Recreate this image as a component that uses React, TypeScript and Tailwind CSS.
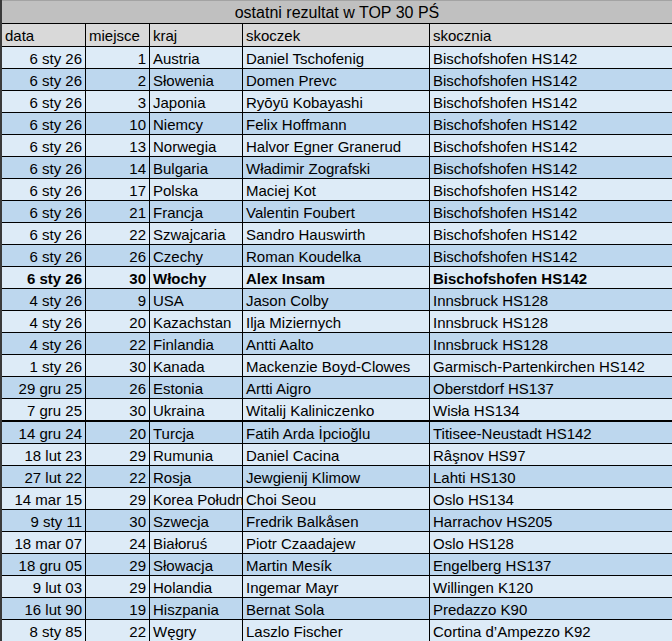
import React from 'react';

type Row = [string, number, string, string, string];

const rows: Row[] = [
  ['6 sty 26', 1, 'Austria', 'Daniel Tschofenig', 'Bischofshofen HS142'],
  ['6 sty 26', 2, 'Słowenia', 'Domen Prevc', 'Bischofshofen HS142'],
  ['6 sty 26', 3, 'Japonia', 'Ryōyū Kobayashi', 'Bischofshofen HS142'],
  ['6 sty 26', 10, 'Niemcy', 'Felix Hoffmann', 'Bischofshofen HS142'],
  ['6 sty 26', 13, 'Norwegia', 'Halvor Egner Granerud', 'Bischofshofen HS142'],
  ['6 sty 26', 14, 'Bulgaria', 'Władimir Zografski', 'Bischofshofen HS142'],
  ['6 sty 26', 17, 'Polska', 'Maciej Kot', 'Bischofshofen HS142'],
  ['6 sty 26', 21, 'Francja', 'Valentin Foubert', 'Bischofshofen HS142'],
  ['6 sty 26', 22, 'Szwajcaria', 'Sandro Hauswirth', 'Bischofshofen HS142'],
  ['6 sty 26', 26, 'Czechy', 'Roman Koudelka', 'Bischofshofen HS142'],
  ['6 sty 26', 30, 'Włochy', 'Alex Insam', 'Bischofshofen HS142'],
  ['4 sty 26', 9, 'USA', 'Jason Colby', 'Innsbruck HS128'],
  ['4 sty 26', 20, 'Kazachstan', 'Ilja Miziernych', 'Innsbruck HS128'],
  ['4 sty 26', 22, 'Finlandia', 'Antti Aalto', 'Innsbruck HS128'],
  ['1 sty 26', 30, 'Kanada', 'Mackenzie Boyd-Clowes', 'Garmisch-Partenkirchen HS142'],
  ['29 gru 25', 26, 'Estonia', 'Artti Aigro', 'Oberstdorf HS137'],
  ['7 gru 25', 30, 'Ukraina', 'Witalij Kaliniczenko', 'Wisła HS134'],
  ['14 gru 24', 20, 'Turcja', 'Fatih Arda İpcioğlu', 'Titisee-Neustadt HS142'],
  ['18 lut 23', 29, 'Rumunia', 'Daniel Cacina', 'Râşnov HS97'],
  ['27 lut 22', 22, 'Rosja', 'Jewgienij Klimow', 'Lahti HS130'],
  ['14 mar 15', 29, 'Korea Południowa', 'Choi Seou', 'Oslo HS134'],
  ['9 sty 11', 30, 'Szwecja', 'Fredrik Balkåsen', 'Harrachov HS205'],
  ['18 mar 07', 24, 'Białoruś', 'Piotr Czaadajew', 'Oslo HS128'],
  ['18 gru 05', 29, 'Słowacja', 'Martin Mesík', 'Engelberg HS137'],
  ['9 lut 03', 29, 'Holandia', 'Ingemar Mayr', 'Willingen K120'],
  ['16 lut 90', 19, 'Hiszpania', 'Bernat Sola', 'Predazzo K90'],
  ['8 sty 85', 22, 'Węgry', 'Laszlo Fischer', 'Cortina d’Ampezzo K92'],
];

const cell = 'h-[21px] leading-[23px] px-[3px] overflow-hidden whitespace-nowrap';

export default function App() {
  return (
    <div
      className="w-[672px] h-[641px] overflow-hidden bg-white text-[15px] text-black border-l-2 border-[#3a3a3a]"
      style={{ fontFamily: '"Liberation Sans", Arial, sans-serif' }}
    >
      {/* title */}
      <div className="h-[24px] border-t border-b border-t-[#a3a3a3] border-b-black bg-[#c0c0c0] text-center text-[16px] leading-[23px]">
        ostatni rezultat w TOP 30 PŚ
      </div>

      {/* header */}
      <div className="grid grid-cols-[84px_64px_93px_187px_1fr] bg-[#d9d9d9] border-b border-black">
        <div className={`${cell} h-[22px] border-r border-black`}>data</div>
        <div className={`${cell} h-[22px] border-r border-black`}>miejsce</div>
        <div className={`${cell} h-[22px] border-r border-black`}>kraj</div>
        <div className={`${cell} h-[22px] border-r border-black`}>skoczek</div>
        <div className={`${cell} h-[22px]`}>skocznia</div>
      </div>

      {rows.map((r, i) => (
        <div
          key={i}
          className={`grid grid-cols-[84px_64px_93px_187px_1fr] border-black ${
            i === 16 ? 'border-b-2' : 'border-b'
          } ${i % 2 === 0 ? 'bg-[#ddebf7]' : 'bg-[#bdd7ee]'} ${i === 10 ? 'font-bold' : ''}`}
        >
          <div className={`${cell} text-right border-r border-black`}>{r[0]}</div>
          <div className={`${cell} text-right border-r border-black`}>{r[1]}</div>
          <div className={`${cell} border-r border-black`}>{r[2]}</div>
          <div className={`${cell} border-r border-black`}>{r[3]}</div>
          <div className={cell}>{r[4]}</div>
        </div>
      ))}
    </div>
  );
}
